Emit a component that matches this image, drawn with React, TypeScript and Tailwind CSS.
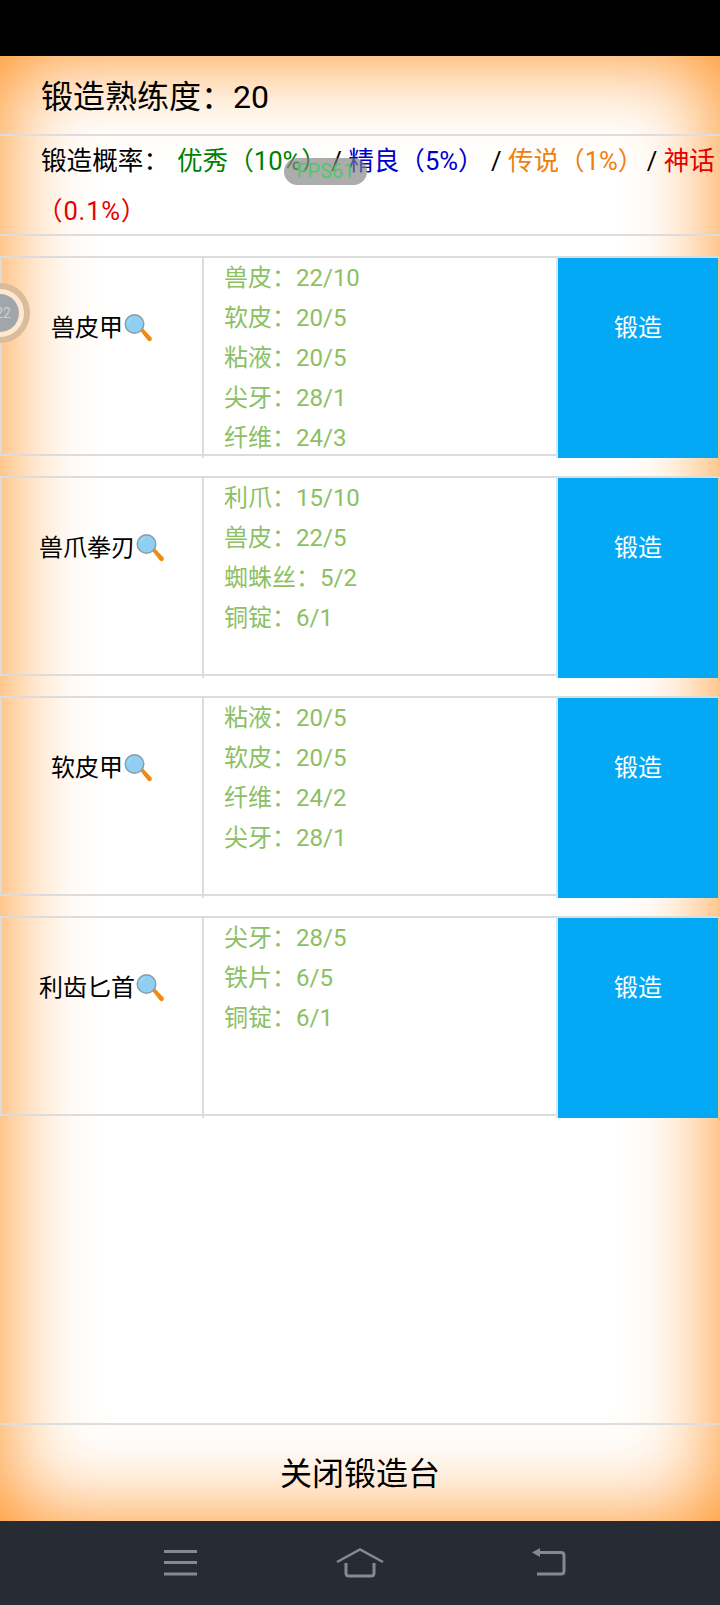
// @ts-nocheck
const FONT = "font-['Roboto','Noto_Sans_CJK_SC',sans-serif]";

const RECIPES = [
  { name: "兽皮甲", items: ["兽皮：22/10", "软皮：20/5", "粘液：20/5", "尖牙：28/1", "纤维：24/3"] },
  { name: "兽爪拳刃", items: ["利爪：15/10", "兽皮：22/5", "蜘蛛丝：5/2", "铜锭：6/1"] },
  { name: "软皮甲", items: ["粘液：20/5", "软皮：20/5", "纤维：24/2", "尖牙：28/1"] },
  { name: "利齿匕首", items: ["尖牙：28/5", "铁片：6/5", "铜锭：6/1"] },
];

function Magnifier() {
  return (
    <svg width="30" height="30" viewBox="0 0 30 30" className="shrink-0">
      <path d="M17.5 18 L20 15.5 L28.5 24.5 Q29.5 26.5 28 27.8 Q26.3 28.8 24.8 27.5 Z" fill="#f08a14" />
      <circle cx="11.5" cy="11" r="10" fill="#8a9ba6" />
      <circle cx="11.5" cy="11" r="8.6" fill="#8fd0f2" />
      <path d="M5 10 A7 7 0 0 1 11 4.5 A9 9 0 0 0 5 10 Z" fill="#dff3fc" />
    </svg>
  );
}

function RecipeRow({ name, items }: { name: string; items: string[] }) {
  return (
    <div className="flex h-[202px] mb-[18px] border-t-2 border-[#dcdcdc] pr-[2px]">
      <div className="w-[204px] h-[200px] shrink-0 border-r-2 border-[#dcdcdc]">
        <div className="h-[198px] border-l-2 border-b-2 border-[#dcdcdc] flex justify-center items-start pt-[55px]">
          <div className="flex items-center text-[24px] leading-[30px] text-black">
            {name}
            <Magnifier />
          </div>
        </div>
      </div>
      <div className="w-[352px] shrink-0 h-[198px] border-b-2 border-[#dcdcdc] pl-[20px] text-[24px] leading-[40px] text-[#8cc063]">
        {items.map((item) => (
          <div key={item}>{item}</div>
        ))}
      </div>
      <div className="flex-1 h-[200px] border-l-2 border-[#cfeafa] bg-[#04a9f5] text-white text-[24px] leading-[140px] text-center">
        锻造
      </div>
    </div>
  );
}

export default function App() {
  return (
    <div className={`${FONT} relative w-[720px] h-[1605px] overflow-hidden bg-black flex flex-col`}>
      <div className="h-[56px] bg-black shrink-0" />

      <div className="flex-1 flex flex-col bg-white shadow-[inset_0_0_90px_#ff8a14]">
        <div className="h-[78px] shrink-0 pl-[41px] pt-[4px] flex items-center text-[32px] text-black">
          锻造熟练度：20
        </div>
        <div className="border-t-2 border-b-2 border-[#dddddd] h-[102px] pl-[41px] text-[25.6px] leading-[50px] text-black shrink-0">
          锻造概率：
          <span className="text-[#008000] ml-[8px]">优秀（10%）</span>
          <span className="-ml-[2px]"> / </span>
          <span className="text-[#0000cd]">精良（5%）</span>
          <span className="ml-[1px]"> / </span>
          <span className="text-[#ee8010]">传说（1%）</span>
          <span className="-ml-[3px]"> / </span>
          <span className="text-[#e60000]">神话</span>
          <span className="text-[#e60000] -ml-[4px] tracking-[0.8px]">（0.1%）</span>
        </div>

        <div className="mt-[20px] flex-1">
          {RECIPES.map((r) => (
            <RecipeRow key={r.name} name={r.name} items={r.items} />
          ))}
        </div>

        <div className="h-[98px] shrink-0 border-t-2 border-[#dddddd] pt-[2px] flex items-center justify-center text-[32px] text-black">
          关闭锻造台
        </div>
      </div>

      <div className="h-[84px] shrink-0 bg-[#272b33] flex items-center">
        <svg width="720" height="84" viewBox="0 0 720 84" fill="none" stroke="#868a8f" strokeWidth="3">
          <path d="M164 30.5H197M164 41.5H197M164 53H197" />
          <path d="M337 41 L360 28.5 L383 41" strokeWidth="2.5" />
          <path d="M346 42 V52 Q346 55 349 55 H371 Q374 55 374 52 V42" />
          <path d="M540 31.5 H561 Q564 31.5 564 34.5 V50 Q564 53 561 53 H537" />
          <path d="M540 27 V36 L532 31.5 Z" fill="#868a8f" stroke="none" />
        </svg>
      </div>

      {/* FPS pill */}
      <div className="absolute left-[284px] top-[158px] w-[83px] h-[27px] rounded-[14px] bg-[#808080]/65 text-[#4fc868] text-[20px] leading-[27px] text-center">
        FPS61
      </div>

      {/* floating ball */}
      <div className="absolute left-[-30px] top-[283px] w-[60px] h-[60px] rounded-full bg-[#ffe8cf] border-[6px] border-[#d9bd9b] flex items-center justify-center">
        <div className="w-[38px] h-[38px] rounded-full bg-[#a0a6aa] text-[#cfcfcf] text-[14px] leading-[38px] text-right pr-[8px]">
          22
        </div>
      </div>
    </div>
  );
}
